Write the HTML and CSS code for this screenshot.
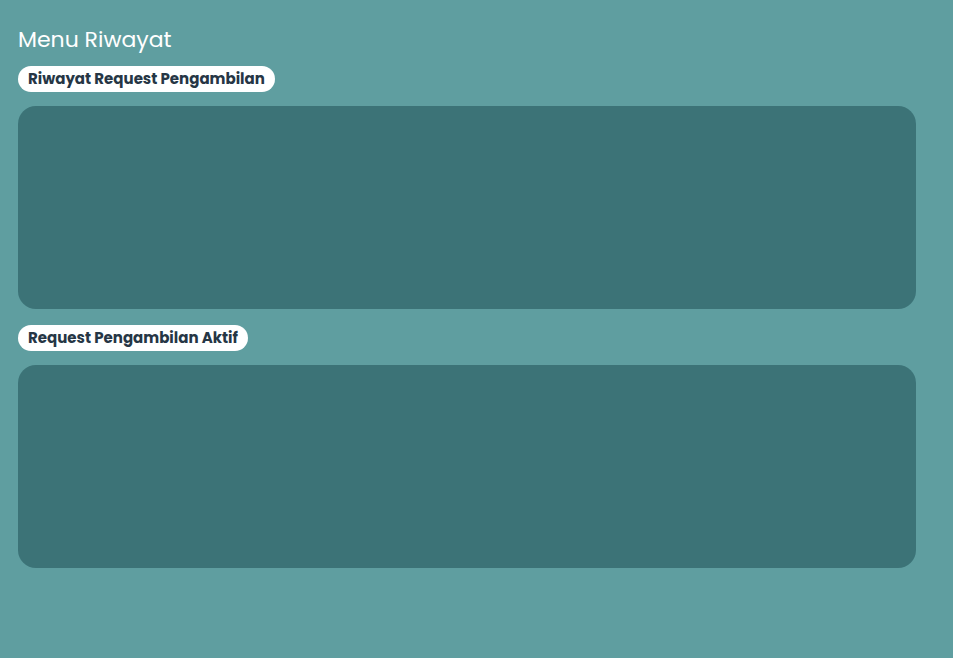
FILE: index.html
```html
<!DOCTYPE html>
<html lang="id">
<head>
  <meta charset="utf-8">
  <meta name="viewport" content="width=device-width, initial-scale=1">
  <title>Menu Riwayat</title>
  <link rel="stylesheet" href="styles.css">
</head>
<body>
  <main class="page">
    <h1 class="page-title">Menu Riwayat</h1>
    <section class="section">
      <h2 class="section-label">Riwayat Request Pengambilan</h2>
      <div class="panel"></div>
    </section>
    <section class="section">
      <h2 class="section-label">Request Pengambilan Aktif</h2>
      <div class="panel"></div>
    </section>
  </main>
</body>
</html>
```

FILE: styles.css
```css
* {
  box-sizing: border-box;
}

body {
  margin: 0;
  min-height: 100vh;
  background: #5f9ea0;
  font-family: Poppins, "Open Sans", sans-serif;
}

.page {
  display: flex;
  flex-direction: column;
  gap: 16px;
  padding: 24px 37px 32px 18px;
}

.page-title {
  margin: 0 0 -6px;
  color: #fff;
  font-size: 22px;
  font-weight: 400;
  line-height: 32px;
}

.section {
  display: flex;
  flex-direction: column;
  align-items: flex-start;
  gap: 14px;
}

.section-label {
  margin: 0;
  padding: 0 10px;
  border-radius: 13px;
  background: #fff;
  color: #263645;
  font-size: 15px;
  font-weight: 700;
  line-height: 26px;
}

.panel {
  width: 100%;
  min-height: 203px;
  border-radius: 18px;
  background: #3c7377;
}
```
